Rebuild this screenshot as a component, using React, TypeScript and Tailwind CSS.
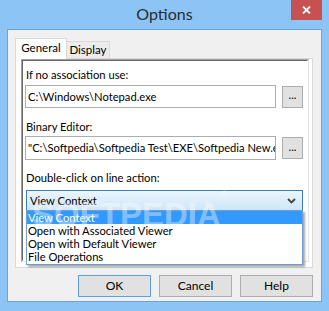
export default function App() {
  const ui = { fontFamily: 'Lato, "Noto Sans", sans-serif' };
  return (
    <div className="relative w-[329px] h-[311px] bg-[#8cc4f5] overflow-hidden" style={ui}>
      {/* title bar */}
      <div className="relative h-[29px] flex items-center justify-center">
        <span className="text-[16px] text-[#2b2b2b] leading-none -mt-[1px]">Options</span>
        <div className="absolute top-0 right-[7px] w-[31px] h-[20px] bg-[#c75050] flex items-center justify-center">
          <svg width="9" height="8" viewBox="0 0 9 8">
            <path d="M1 0.5 L8 7.5 M8 0.5 L1 7.5" stroke="#fff" strokeWidth="1.8" />
          </svg>
        </div>
      </div>

      {/* client area */}
      <div className="mx-[7px] h-[273px] border border-[#6aa3d8] bg-[#f0f0f0] pl-[7px] pr-[8px] pt-[8px]">
        {/* tabs */}
        <div className="flex items-end h-[21px] relative z-10 text-[11.5px] text-black leading-none">
          <div className="w-[52px] h-[21px] bg-white border border-b-0 border-[#d9d9d9] flex items-center justify-center pb-[2px]">
            General
          </div>
          <div className="w-[43px] h-[18px] bg-[#ececec] border border-l-0 border-[#d9d9d9] flex items-center justify-center">
            Display
          </div>
        </div>

        {/* panel */}
        <div className="-mt-[1px] w-[298px] h-[210px] bg-white border border-[#d9d9d9] pl-[5px] pr-[3px] pb-[5px]">
          <div className="h-full border-t border-l border-[#a0a0a0] border-r border-b border-r-[#e3e3e3] border-b-[#e3e3e3]">
            <div className="h-full border-t border-l border-[#696969] border-r border-b border-r-white border-b-white pl-[2px] pt-[7px] text-[11.2px] leading-[14px] text-black">
              <div className="pl-[1px]">If no association use:</div>
              <div className="flex items-center mt-[3px]">
                <div className="w-[251px] h-[23px] border border-[#abadb3] bg-white pl-[2px] flex items-center whitespace-nowrap overflow-hidden">
                  C:\Windows\Notepad.exe
                </div>
                <div className="ml-[6px] w-[21px] h-[22px] border border-[#adadad] bg-[#e1e1e1] flex items-center justify-center leading-none pb-[3px]">
                  ...
                </div>
              </div>

              <div className="pl-[1px] mt-[12px]">Binary Editor:</div>
              <div className="flex items-center mt-[2px]">
                <div className="w-[251px] h-[24px] border border-[#abadb3] bg-white pl-[2px] flex items-center whitespace-nowrap overflow-hidden">
                  "C:\Softpedia\Softpedia Test\EXE\Softpedia New.exe"
                </div>
                <div className="ml-[6px] w-[21px] h-[22px] border border-[#adadad] bg-[#e1e1e1] flex items-center justify-center leading-none pb-[3px]">
                  ...
                </div>
              </div>

              <div className="pl-[1px] mt-[11px]">Double-click on line action:</div>
              <div className="relative ml-[1px] mt-[5px] w-[277px]">
                <div className="h-[21px] border border-[#3c7fb1] bg-gradient-to-b from-[#ecf5fc] to-[#cfe6f8] flex items-center pl-[3px] pr-[6px]">
                  <span className="flex-1">View Context</span>
                  <svg width="9" height="6" viewBox="0 0 9 6">
                    <path d="M1 1 L4.5 4.5 L8 1" stroke="#444" strokeWidth="1.8" fill="none" />
                  </svg>
                </div>
                <div className="absolute left-0 top-[20px] w-[277px] border border-[#6e9fd0] bg-white shadow-[2px_2px_2px_rgba(0,0,0,0.35)] leading-[13px] z-20">
                  <div className="bg-[#3399ff] text-white pl-[1px] h-[13px]">View Context</div>
                  <div className="pl-[1px] h-[13px]">Open with Associated Viewer</div>
                  <div className="pl-[1px] h-[13px]">Open with Default Viewer</div>
                  <div className="pl-[1px] h-[13px] mb-[1px]">File Operations</div>
                </div>
                <div
                  className="absolute left-[6px] top-[8px] z-30 text-[33px] font-bold text-white/40 leading-none pointer-events-none whitespace-nowrap"
                  style={{ fontFamily: '"Liberation Sans", sans-serif' }}
                >
                  SOFTPEDIA<sup className="text-[9px] align-top">®</sup>
                </div>
              </div>
            </div>
          </div>
        </div>

        {/* buttons */}
        <div className="flex justify-end gap-[8px] mt-[7px] text-[12px] text-black">
          <div className="w-[73px] h-[22px] border border-[#5aa0e6] bg-[#e1e1e1] flex items-center justify-center">OK</div>
          <div className="w-[73px] h-[22px] border border-[#adadad] bg-[#e1e1e1] flex items-center justify-center">Cancel</div>
          <div className="w-[73px] h-[22px] border border-[#adadad] bg-[#e1e1e1] flex items-center justify-center">Help</div>
        </div>
      </div>
    </div>
  );
}
